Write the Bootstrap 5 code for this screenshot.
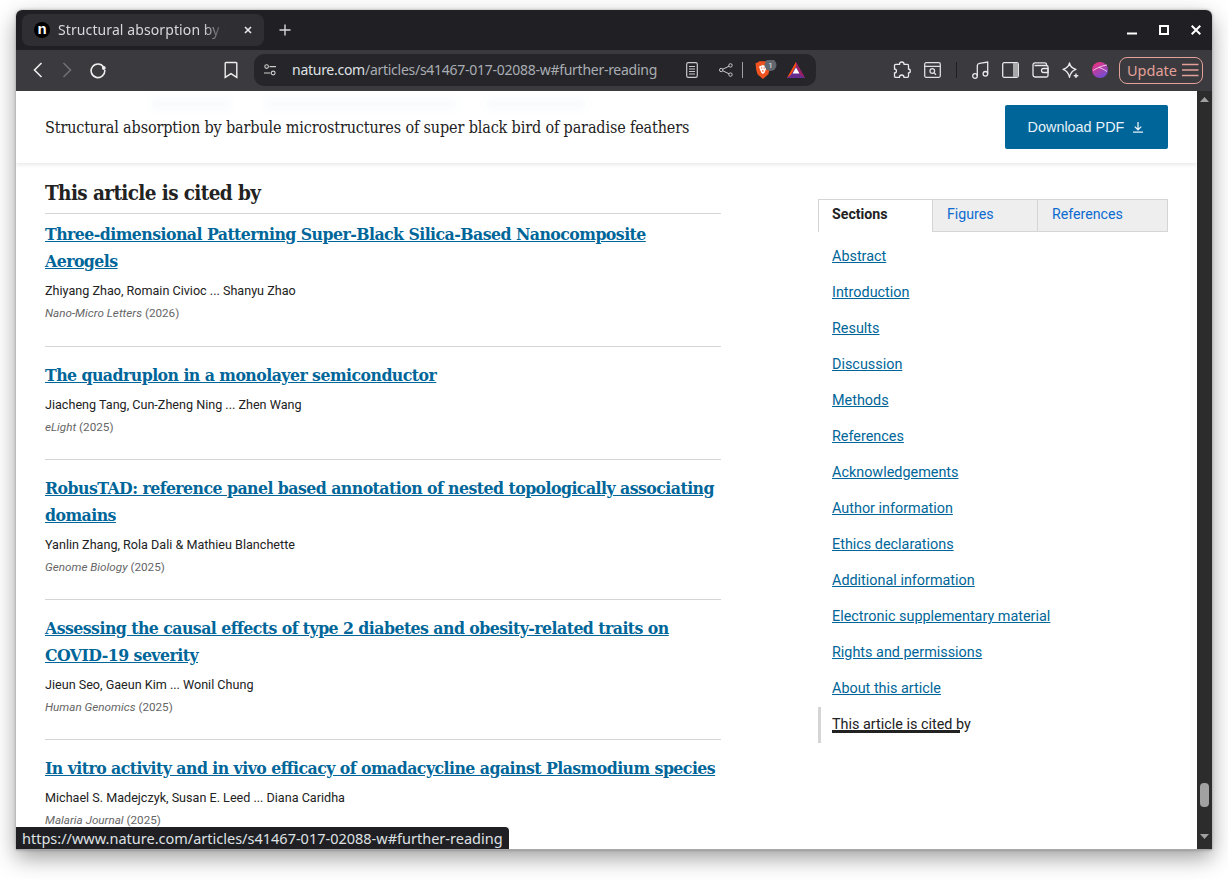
<!DOCTYPE html>
<html lang="en"><head><meta charset="utf-8"><title>Structural absorption</title>
<link href="https://cdn.jsdelivr.net/npm/bootstrap@5.3.0/dist/css/bootstrap.min.css" rel="stylesheet">
<style>
html,body{height:881px;overflow:hidden;background:#fff}
body{padding:10px 16px 31px;font-family:Roboto,sans-serif}
.win{height:840px;border-radius:6px 6px 0 0;box-shadow:0 8px 22px rgba(0,0,0,.38),0 0 3px rgba(0,0,0,.3);overflow:hidden;position:relative;background:#fff;border-bottom:1px solid #a8a8a8}
.tabstrip{height:40px;background:#202024;color:#e8e8ea;flex:none}
.tabbox{width:242px;height:32px;margin-left:6px;background:#2e2e33;border-radius:8px;padding-left:12px;gap:8px}
.favi{width:16px;height:16px;border-radius:50%;background:#000;color:#fff;font:700 15px/14px "Liberation Sans",sans-serif;text-align:center;flex:none}
.tabtitle{width:167px;font:14px/20px "Noto Sans",sans-serif;letter-spacing:.1px;white-space:nowrap;overflow:hidden;color:#d8d8da;-webkit-mask-image:linear-gradient(90deg,#000 145px,transparent 167px);mask-image:linear-gradient(90deg,#000 145px,transparent 167px)}
.toolbar{height:41px;background:#3a3a3f;flex:none;padding-bottom:1px}
.ic{flex:none;display:block}
.urlbox{width:562px;height:32px;background:#26262a;border-radius:10px;margin-left:16px;flex:none}
.urltext{font:14px/20px "Noto Sans",sans-serif;color:#a9adb3;white-space:nowrap;width:365px;margin-left:16px;letter-spacing:-.27px}
.urltext b{font-weight:400;color:#dfe1e4}
.sep{width:1px;height:16px;background:#a0a0a4}
.upd{width:84px;height:27px;border:1px solid #e3a199;border-radius:8px;color:#e3a199;font:14.5px/20px "Noto Sans",sans-serif;padding-left:7px}
.view{height:758px;overflow:hidden;flex:none}
.pg{width:1181px;flex:none;overflow:hidden}
.sbar{width:15px;background:#2c2c2c;position:relative;flex:none}
.thumb{position:absolute;left:3px;top:692px;width:9px;height:24px;background:#a1a1a1;border-radius:4px}
.hdr{height:72px;padding:0 29px;box-shadow:0 1px 5px rgba(0,0,0,.12);position:relative;background:#fff}
.ghost{position:absolute;top:8px;height:10px;background:rgba(0,102,153,.03);filter:blur(4px)}
.hdr-t{font:400 16px/22px "DejaVu Serif",serif;font-stretch:condensed;color:#222;letter-spacing:-.13px;padding-top:1px;position:relative}
.dl{width:163px;height:44px;background:#00669a;color:#e8f2f8;border-radius:2px;font:14.4px/20px "Liberation Sans",sans-serif;gap:9px;text-decoration:none;padding-right:2px;position:relative}
.cols{padding:0 29px}
.lcol{width:676px;flex:none}
.rcol{width:350px;flex:none;margin-left:97px;padding-top:36px}
.h-cited{font:700 20.5px/28px "DejaVu Serif",serif;font-stretch:condensed;color:#222;margin:16px 0 6px;letter-spacing:-.6px}
.cite{border-top:1px solid #d5d5d5;padding:15px 0 22px}
.cite.first{padding:7px 0 23px}
.cite-t{font:700 17.5px/27px "DejaVu Serif",serif;font-stretch:condensed;letter-spacing:-.54px;margin:0}
.cite-t a,.slink{color:#006699}
.cite-a{font-size:12.6px;line-height:20px;margin:6px 0 2px;color:#222}
.cite-j{font-size:11.7px;line-height:20px;color:#666}
.tabsx{height:33px;font-size:14.2px;line-height:28px}
.tabx{border:1px solid #d5d5d5;background:#eee;color:#0c6bd0;padding-left:14px;border-left:0;height:33px}
.tabx.on{background:#fff;color:#222;font-weight:700;border-left:1px solid #d5d5d5;border-bottom:0;padding-left:13px}
.seclist{list-style:none;margin:7px 0 0;padding:0;font-size:14.4px}
.seclist li{height:36px;line-height:36px;padding-left:14px}
.seclist li.cur{border-left:3px solid #d5d5d5;padding-left:11px;color:#222;position:relative}
.curline{position:absolute;left:11px;top:23px;width:128px;height:3px;background:#222}
.status{position:absolute;left:0;bottom:0;height:22px;width:493px;background:#202024;color:#dfe1e4;font:14.5px/22px "Noto Sans",sans-serif;padding-left:6px;border-radius:0 4px 0 0;white-space:nowrap;z-index:5;overflow:hidden}
</style></head><body>
<div class="win d-flex flex-column">
 <div class="tabstrip d-flex align-items-center">
  <div class="tabbox d-flex align-items-center">
   <span class="favi">n</span><span class="tabtitle">Structural absorption by barbule</span>
   <svg class="ic" style="margin-left:11px" width="8" height="8" viewBox="0 0 8 8"><path d="M1 1l6 6M7 1L1 7" stroke="#e8e8ea" stroke-width="1.6"/></svg>
  </div>
  <svg class="ic" style="margin-left:15px" width="12" height="12" viewBox="0 0 12 12"><path d="M6 .5v11M.5 6h11" stroke="#d8d8da" stroke-width="1.4"/></svg>
  <div class="ms-auto d-flex align-items-center" style="gap:22px;margin-right:11px">
   <svg class="ic" width="10" height="10" viewBox="0 0 10 10"><path d="M0 8.500h10" stroke="#fff" stroke-width="2"/></svg>
   <svg class="ic" width="10" height="10" viewBox="0 0 10 10"><rect x="1" y="1" width="8" height="8" fill="none" stroke="#fff" stroke-width="2"/></svg>
   <svg class="ic" width="10" height="10" viewBox="0 0 10 10"><path d="M.7.7l8.600 8.600M9.300.7L.7 9.300" stroke="#fff" stroke-width="2"/></svg>
  </div>
 </div>
 <div class="toolbar d-flex align-items-center">
  <svg class="ic" style="margin-left:17px" width="10" height="16" viewBox="0 0 10 16"><path d="M8.500 1L1.500 8l7 7" fill="none" stroke="#eee" stroke-width="1.600"/></svg>
  <svg class="ic" style="margin-left:19px" width="10" height="16" viewBox="0 0 10 16"><path d="M1.500 1l7 7-7 7" fill="none" stroke="#6f6f74" stroke-width="1.600"/></svg>
  <svg class="ic" style="margin-left:17px" width="18" height="18" viewBox="0 0 18 18"><path d="M14.600 6A6.800 6.800 0 1 0 15.700 9" fill="none" stroke="#eee" stroke-width="1.600"/><circle cx="14.800" cy="7" r="1.900" fill="#eee"/></svg>
  <svg class="ic" style="margin-left:117px" width="14" height="18" viewBox="0 0 14 18"><path d="M2 1.500h10a.8.800 0 0 1 .8.800V16.400L7 12.600 1.200 16.400V2.300a.8.800 0 0 1 .8-.8z" fill="none" stroke="#eee" stroke-width="1.400"/></svg>
  <div class="urlbox d-flex align-items-center">
   <svg class="ic" style="margin-left:10px" width="12" height="12" viewBox="0 0 12 12"><circle cx="2.600" cy="2.600" r="1.800" fill="none" stroke="#ccc" stroke-width="1.100"/><path d="M5.500 2.600H12M0 9h6.500" stroke="#ccc" stroke-width="1.100"/><circle cx="9.200" cy="9" r="1.900" fill="none" stroke="#ccc" stroke-width="1.100"/></svg>
   <span class="urltext"><b>nature.com</b>/articles/s41467-017-02088-w#further-reading</span>
   <svg class="ic" style="margin-left:29px" width="12" height="16" viewBox="0 0 12 16"><rect x=".7" y=".7" width="10.600" height="14.600" rx="1.600" fill="none" stroke="#c9c9cc" stroke-width="1.200"/><path d="M3 4.500h6M3 7h6M3 9.500h6M3 12h6" stroke="#c9c9cc" stroke-width="1.200"/></svg>
   <svg class="ic" style="margin-left:21px" width="14" height="14" viewBox="0 0 14 14"><circle cx="2.200" cy="7" r="1.700" fill="none" stroke="#c9c9cc" stroke-width="1"/><circle cx="11.500" cy="2.400" r="1.700" fill="none" stroke="#c9c9cc" stroke-width="1"/><circle cx="11.500" cy="11.600" r="1.700" fill="none" stroke="#c9c9cc" stroke-width="1"/><path d="M3.800 6.200L10 3.200M3.800 7.800l6.200 3" stroke="#c9c9cc" stroke-width="1"/></svg>
   <span class="sep" style="margin-left:9px"></span>
   <svg class="ic" style="margin-left:11px" width="23" height="20" viewBox="0 0 23 20"><path d="M3 2.500l2-1.200h6.500L13.500 2.500l2 .8-.5 7-1.200 4L8.400 19 3 14.300l-1.200-4-.8-7z" fill="#f0531f" transform="translate(.5 0)"/><path d="M5 6.500l3.800-1.500L13 6.500l-1.200 3-1.300 3.200-1.600 1.300-1.600-1.300L6 9.500z" fill="#fff"/><path d="M7 8h1.200M9.600 8h1.200M8.900 10v2" stroke="#f0531f" stroke-width="1"/><circle cx="16.500" cy="5" r="6" fill="#62666f"/><text x="16.500" y="7.800" font-family="Roboto,sans-serif" font-size="8" fill="#e8e8e8" text-anchor="middle">1</text></svg>
   <svg class="ic" style="margin-left:10px" width="18" height="16" viewBox="0 0 18 16"><path d="M9 0l9 16H0z" fill="#662d91"/><path d="M9 0L0 16l4-3.500L9 4z" fill="#ff5000"/><path d="M9 0l9 16-5-3.500L9 4z" fill="#9e1f63"/><path d="M9 5.500l3.400 6H5.600z" fill="#fff"/></svg>
  </div>
  <svg class="ic" style="margin-left:77px" width="18" height="18" viewBox="0 0 18 18"><path d="M6.500 3.400C6.500 1.800 7.600 1 8.800 1s2.300.8 2.300 2.400h3.400c.7 0 1 .4 1 1V8c1.300 0 1.800 1 1.800 2s-.8 2-1.800 2v3.200c0 .7-.5 1.100-1.100 1.100H11c0-1.500-1-2.300-2.300-2.300S6.400 14.800 6.400 16.300H2.700c-.7 0-1.200-.5-1.200-1.100V12C2.800 12 3.400 11 3.400 10S2.800 8 1.500 8V4.500c0-.7.500-1.100 1.100-1.100z" fill="none" stroke="#e8e8ea" stroke-width="1.300"/></svg>
  <svg class="ic" style="margin-left:13px" width="17" height="16" viewBox="0 0 17 16"><rect x=".7" y=".7" width="15.600" height="14.600" rx="1.500" fill="none" stroke="#e0e0e2" stroke-width="1.300"/><path d="M1 4.300h15" stroke="#e0e0e2" stroke-width="1.300"/><circle cx="8.300" cy="9" r="2.300" fill="none" stroke="#e0e0e2" stroke-width="1.300"/><path d="M10 10.800l2 2" stroke="#e0e0e2" stroke-width="1.300"/></svg>
  <span class="sep" style="margin-left:15px;background:#202024"></span>
  <svg class="ic" style="margin-left:15px" width="17" height="18" viewBox="0 0 17 18"><circle cx="3" cy="15" r="2.300" fill="none" stroke="#e8e8ea" stroke-width="1.300"/><circle cx="13.400" cy="12.800" r="2.300" fill="none" stroke="#e8e8ea" stroke-width="1.300"/><path d="M5.300 15V4.500C5.300 3 6.300 2.500 7.500 2.300L15.700 1v11.800" fill="none" stroke="#e8e8ea" stroke-width="1.300"/></svg>
  <svg class="ic" style="margin-left:13px" width="17" height="16" viewBox="0 0 17 16"><rect x=".7" y=".7" width="15.600" height="14.600" rx="1.500" fill="none" stroke="#e8e8ea" stroke-width="1.300"/><rect x="11" y="1" width="5" height="14" fill="#a8a8aa"/></svg>
  <svg class="ic" style="margin-left:13px" width="17" height="16" viewBox="0 0 17 16"><path d="M2.500 3.500h12V2.400c0-1-.7-1.500-1.500-1.500H3C1.800.9 1 1.700 1 3v9.500c0 1.500 1 2.500 2.500 2.500h11c1 0 1.500-.6 1.500-1.500V5c0-.9-.5-1.500-1.500-1.500" fill="none" stroke="#e8e8ea" stroke-width="1.300"/><path d="M16 6.500h-4.500a2 2 0 0 0 0 4H16z" fill="none" stroke="#e8e8ea" stroke-width="1.300"/></svg>
  <svg class="ic" style="margin-left:13px" width="17" height="17" viewBox="0 0 17 17"><path d="M7.500 1c.7 3.500 2.400 5.300 6.500 6.300-3.800 1.300-5.600 3-6.500 8-.9-4.500-2.900-6.800-6.500-8 3.700-1 5.700-2.800 6.500-6.300z" fill="none" stroke="#e8e8ea" stroke-width="1.300" stroke-linejoin="round"/><path d="M14 11.500v4.500M11.800 13.700h4.500" stroke="#e8e8ea" stroke-width="1.400"/></svg>
  <svg class="ic" style="margin-left:13px" width="16" height="16" viewBox="0 0 16 16"><defs><linearGradient id="gr" x1=".2" y1="0" x2=".8" y2="1"><stop offset="0" stop-color="#f0317e"/><stop offset="1" stop-color="#6a4fd8"/></linearGradient></defs><circle cx="8" cy="8" r="8" fill="url(#gr)"/><path d="M1 8.500C5 6 9 4 15 3M7 5.500c2 .5 5 2 8 4" fill="none" stroke="#fff" stroke-width=".7"/></svg>
  <div class="upd d-flex align-items-center" style="margin-left:11px"><span>Update</span>
   <svg class="ic" style="margin-left:5px" width="17" height="14" viewBox="0 0 17 14"><path d="M0 1.500h16.500M0 7h16.500M0 12.500h16.500" stroke="#e3a199" stroke-width="1.600"/></svg></div>
 </div>
 <div class="view d-flex">
  <div class="pg">
   <div class="hdr d-flex align-items-center justify-content-between">
    <span class="ghost" style="left:135px;width:80px"></span><span class="ghost" style="left:250px;width:190px"></span><span class="ghost" style="left:470px;width:100px"></span>
    <div class="hdr-t">Structural absorption by barbule microstructures of super black bird of paradise feathers</div>
    <a class="dl d-flex align-items-center justify-content-center" href="#">Download PDF
     <svg class="ic" width="10" height="11" viewBox="0 0 10 11"><path d="M5 0v7.500M1.800 4.600L5 7.800l3.200-3.200M0 10.200h10" fill="none" stroke="#e8f2f8" stroke-width="1.300"/></svg></a>
   </div>
   <div class="cols d-flex">
    <div class="lcol">
     <h2 class="h-cited">This article is cited by</h2>
     <div class="cite first"><h3 class="cite-t"><a href="#">Three-dimensional Patterning Super-Black Silica-Based Nanocomposite Aerogels</a></h3><p class="cite-a">Zhiyang Zhao, Romain Civioc ... Shanyu Zhao</p><div class="cite-j"><i>Nano-Micro Letters</i> (2026)</div></div>
     <div class="cite"><h3 class="cite-t"><a href="#">The quadruplon in a monolayer semiconductor</a></h3><p class="cite-a">Jiacheng Tang, Cun-Zheng Ning ... Zhen Wang</p><div class="cite-j"><i>eLight</i> (2025)</div></div>
     <div class="cite"><h3 class="cite-t"><a href="#">RobusTAD: reference panel based annotation of nested topologically associating domains</a></h3><p class="cite-a">Yanlin Zhang, Rola Dali &amp; Mathieu Blanchette</p><div class="cite-j"><i>Genome Biology</i> (2025)</div></div>
     <div class="cite"><h3 class="cite-t"><a href="#">Assessing the causal effects of type 2 diabetes and obesity-related traits on COVID-19 severity</a></h3><p class="cite-a">Jieun Seo, Gaeun Kim ... Wonil Chung</p><div class="cite-j"><i>Human Genomics</i> (2025)</div></div>
     <div class="cite"><h3 class="cite-t"><a href="#">In vitro activity and in vivo efficacy of omadacycline against Plasmodium species</a></h3><p class="cite-a">Michael S. Madejczyk, Susan E. Leed ... Diana Caridha</p><div class="cite-j"><i>Malaria Journal</i> (2025)</div></div>
    </div>
    <div class="rcol">
     <div class="tabsx d-flex">
      <div class="tabx on" style="width:115px">Sections</div>
      <div class="tabx" style="width:105px">Figures</div>
      <div class="tabx" style="width:130px">References</div>
     </div>
     <ul class="seclist">
      <li><a class="slink" href="#">Abstract</a></li>
      <li><a class="slink" href="#">Introduction</a></li>
      <li><a class="slink" href="#">Results</a></li>
      <li><a class="slink" href="#">Discussion</a></li>
      <li><a class="slink" href="#">Methods</a></li>
      <li><a class="slink" href="#">References</a></li>
      <li><a class="slink" href="#">Acknowledgements</a></li>
      <li><a class="slink" href="#">Author information</a></li>
      <li><a class="slink" href="#">Ethics declarations</a></li>
      <li><a class="slink" href="#">Additional information</a></li>
      <li><a class="slink" href="#">Electronic supplementary material</a></li>
      <li><a class="slink" href="#">Rights and permissions</a></li>
      <li><a class="slink" href="#">About this article</a></li>
      <li class="cur">This article is cited by<span class="curline"></span></li>
     </ul>
    </div>
   </div>
  </div>
  <div class="sbar">
   <svg class="ic" style="margin:6px 0 0 3px" width="9" height="5" viewBox="0 0 9 5"><path d="M4.500 0L9 5H0z" fill="#a1a1a1"/></svg>
   <div class="thumb"></div>
   <svg class="ic position-absolute" style="left:3px;top:743px" width="9" height="5" viewBox="0 0 9 5"><path d="M4.500 5L9 0H0z" fill="#a1a1a1"/></svg>
  </div>
 </div>
 <div class="status">https://www.nature.com/articles/s41467-017-02088-w#further-reading</div>
</div>
</body></html>
